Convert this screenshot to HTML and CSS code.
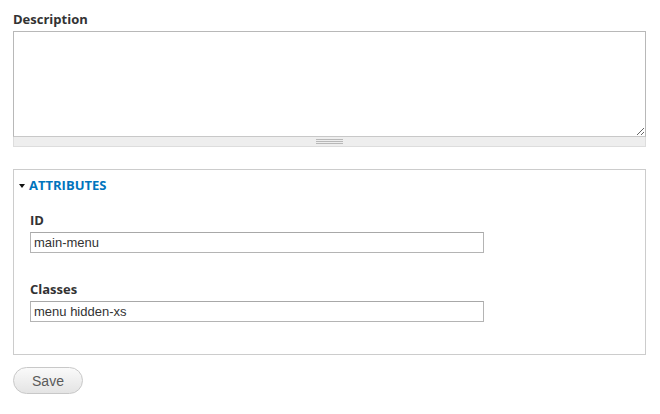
FILE: index.html
```html
<!DOCTYPE html>
<html>
<head>
<meta charset="utf-8">
<link rel="stylesheet" href="styles.css">
</head>
<body>
<form class="page">
  <div class="field">
    <label class="label" for="desc">Description</label>
    <div class="textarea-wrap">
      <textarea id="desc" class="textarea"></textarea>
      <div class="grippie"><span class="grip-lines"></span></div>
    </div>
  </div>

  <fieldset class="details">
    <div class="summary"><span class="caret"></span><span class="summary-text">ATTRIBUTES</span></div>
    <div class="details-body">
      <div class="field">
        <label class="label" for="id">ID</label>
        <input id="id" class="input" type="text" value="main-menu">
      </div>
      <div class="field">
        <label class="label" for="classes">Classes</label>
        <input id="classes" class="input" type="text" value="menu hidden-xs">
      </div>
    </div>
  </fieldset>

  <div class="actions">
    <button type="button" class="button">Save</button>
  </div>
</form>
</body>
</html>
```

FILE: styles.css
```css
html, body {
  margin: 0;
  padding: 0;
  background: #ffffff;
}

.page {
  display: flex;
  flex-direction: column;
  padding: 10px 14px 0 13px;
  font-family: "Open Sans", "Noto Sans", sans-serif;
  color: #333;
}

.field {
  display: flex;
  flex-direction: column;
}

.label {
  font-weight: bold;
  font-size: 13px;
  line-height: 18px;
  color: #333;
  margin-bottom: 3px;
}

.textarea-wrap {
  display: flex;
  flex-direction: column;
}

.textarea {
  box-sizing: border-box;
  height: 106px;
  margin: 0;
  border: 1px solid #b8b8b8;
  border-bottom-color: #c8c8c8;
  resize: vertical;
  font-family: "Liberation Sans", sans-serif;
  font-size: 13px;
  outline: none;
}

.grippie {
  box-sizing: border-box;
  height: 10px;
  background: #eeeeee;
  border: 1px solid #dddddd;
  border-top: none;
  display: flex;
  justify-content: center;
  align-items: center;
}

.grip-lines {
  width: 27px;
  height: 5px;
  border-top: 1px solid #b8b8b8;
  border-bottom: 1px solid #b8b8b8;
  position: relative;
  box-sizing: border-box;
}

.grip-lines::after {
  content: "";
  position: absolute;
  left: 0;
  right: 0;
  top: 1px;
  border-top: 1px solid #b8b8b8;
}

.details {
  margin: 22px 0 0 0;
  padding: 7px 16px 32px 4px;
  border: 1px solid #cccccc;
  min-width: 0;
}

.summary {
  display: flex;
  align-items: center;
  height: 16px;
}

.caret {
  width: 0;
  height: 0;
  border-left: 3.5px solid transparent;
  border-right: 3.5px solid transparent;
  border-top: 4px solid #111;
  margin: 1px 4px 0 1px;
}

.summary-text {
  font-family: "Open Sans", "Noto Sans", sans-serif;
  font-weight: bold;
  font-size: 13px;
  color: #0074bd;
}

.details-body {
  display: flex;
  flex-direction: column;
  gap: 27px;
  padding: 18px 0 0 12px;
}

.input {
  box-sizing: border-box;
  width: 454px;
  height: 21px;
  margin: 0;
  padding: 1px 3px;
  border: 1px solid #b4b4b4;
  border-top-color: #a8a8a8;
  font-family: "Liberation Sans", Arial, sans-serif;
  font-size: 13px;
  color: #333;
  background: #fff;
  outline: none;
}

.actions {
  display: flex;
  margin-top: 12px;
}

.button {
  box-sizing: border-box;
  width: 70px;
  height: 27px;
  border: 1px solid #c8c8c8;
  border-radius: 14px;
  background: linear-gradient(to bottom, #fafafa, #e4e4e4);
  font-family: "Liberation Sans", Arial, sans-serif;
  font-size: 14px;
  color: #5a5a5a;
  padding: 0;
}
```
